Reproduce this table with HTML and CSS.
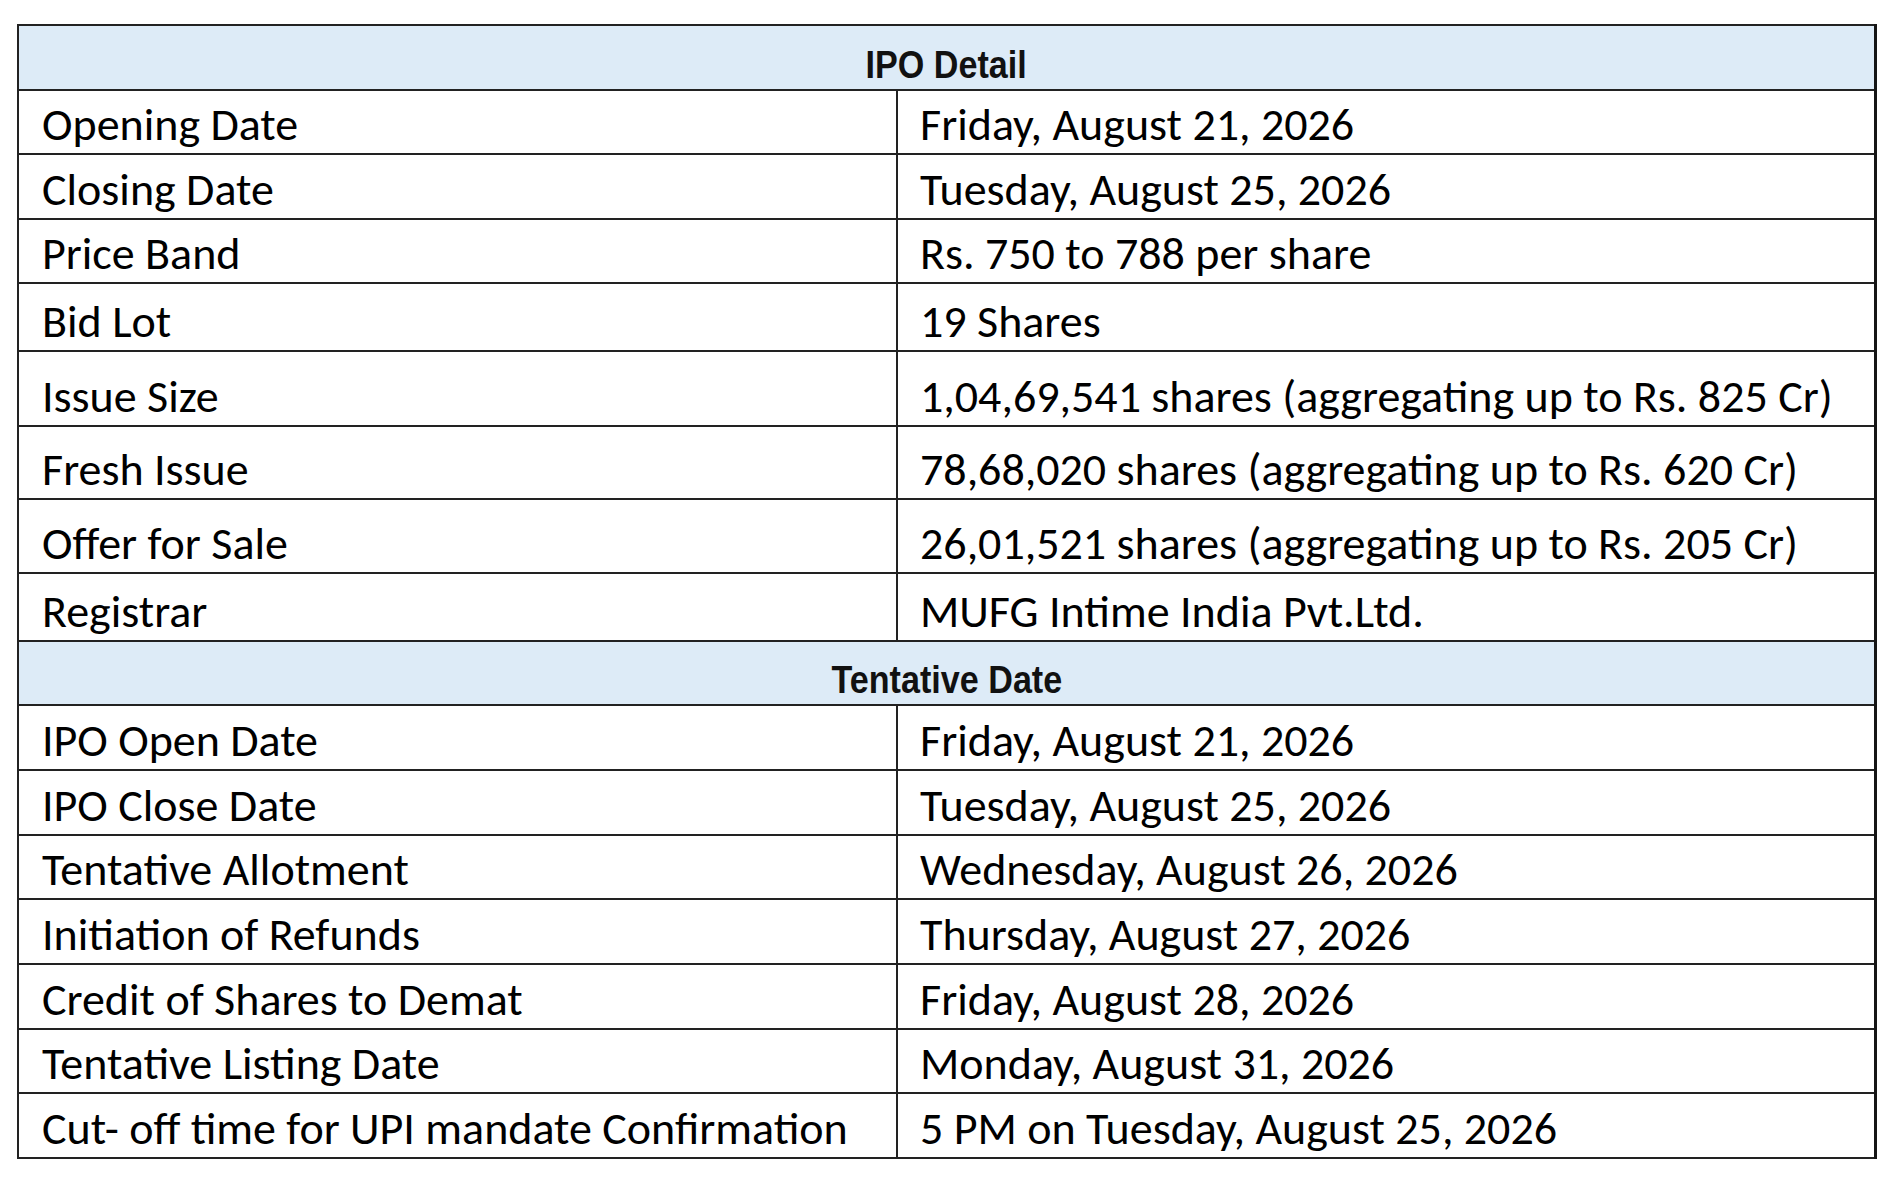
FILE: index.html
```html
<!DOCTYPE html>
<html lang="en">
<head>
<meta charset="utf-8">
<title>IPO Detail</title>
<link rel="stylesheet" href="styles.css">
</head>
<body>
<table class="ipo-table">
  <colgroup>
    <col class="label-col">
    <col class="value-col">
  </colgroup>
  <tbody>
    <tr class="section-row h65"><th colspan="2"><span class="section-title">IPO Detail</span></th></tr>
    <tr class="h64"><td class="label">Opening Date</td><td class="value">Friday, August 21, 2026</td></tr>
    <tr class="h65"><td class="label">Closing Date</td><td class="value">Tuesday, August 25, 2026</td></tr>
    <tr class="h64"><td class="label">Price Band</td><td class="value">Rs. 750 to 788 per share</td></tr>
    <tr class="h68"><td class="label">Bid Lot</td><td class="value">19 Shares</td></tr>
    <tr class="h75"><td class="label">Issue Size</td><td class="value">1,04,69,541 shares (aggregating up to Rs. 825 Cr)</td></tr>
    <tr class="h73"><td class="label">Fresh Issue</td><td class="value">78,68,020 shares (aggregating up to Rs. 620 Cr)</td></tr>
    <tr class="h74"><td class="label">Offer for Sale</td><td class="value">26,01,521 shares (aggregating up to Rs. 205 Cr)</td></tr>
    <tr class="h68"><td class="label">Registrar</td><td class="value">MUFG Intime India Pvt.Ltd.</td></tr>
    <tr class="section-row h64"><th colspan="2"><span class="section-title">Tentative Date</span></th></tr>
    <tr class="h65"><td class="label">IPO Open Date</td><td class="value">Friday, August 21, 2026</td></tr>
    <tr class="h65"><td class="label">IPO Close Date</td><td class="value">Tuesday, August 25, 2026</td></tr>
    <tr class="h64"><td class="label">Tentative Allotment</td><td class="value">Wednesday, August 26, 2026</td></tr>
    <tr class="h65"><td class="label">Initiation of Refunds</td><td class="value">Thursday, August 27, 2026</td></tr>
    <tr class="h65"><td class="label">Credit of Shares to Demat</td><td class="value">Friday, August 28, 2026</td></tr>
    <tr class="h64"><td class="label">Tentative Listing Date</td><td class="value">Monday, August 31, 2026</td></tr>
    <tr class="h65"><td class="label">Cut- off time for UPI mandate Confirmation</td><td class="value">5 PM on Tuesday, August 25, 2026</td></tr>
  </tbody>
</table>
</body>
</html>
```

FILE: styles.css
```css
html, body {
  margin: 0;
  padding: 0;
  background: #ffffff;
}

body {
  padding: 24px 0 0 17px;
  font-family: "Carlito", "Lato", "Liberation Sans", sans-serif;
  color: #000000;
}

.ipo-table {
  border-collapse: collapse;
  width: 1860px;
  table-layout: fixed;
  border-right: 3px solid #151515;
}

.label-col {
  width: 879px;
}

.ipo-table td,
.ipo-table th {
  border: 2px solid #222222;
  padding: 0 4px 6px 23px;
  vertical-align: bottom;
  font-size: 46px;
  line-height: 46px;
  white-space: nowrap;
  overflow: visible;
  text-align: left;
  font-weight: normal;
}

.ipo-table td.value {
  padding-left: 22px;
}

.section-row th {
  background: #ddebf7;
  text-align: center;
  padding: 0 0 5px 0;
  font-family: "Liberation Sans", "Arial", sans-serif;
  font-weight: bold;
  font-size: 39px;
  line-height: 39px;
  color: #111111;
}

.section-title {
  display: inline-block;
  transform: scaleX(0.875);
}

.h64 { height: 64px; }
.h65 { height: 65px; }
.h68 { height: 68px; }
.h73 { height: 73px; }
.h74 { height: 74px; }
.h75 { height: 75px; }
```
